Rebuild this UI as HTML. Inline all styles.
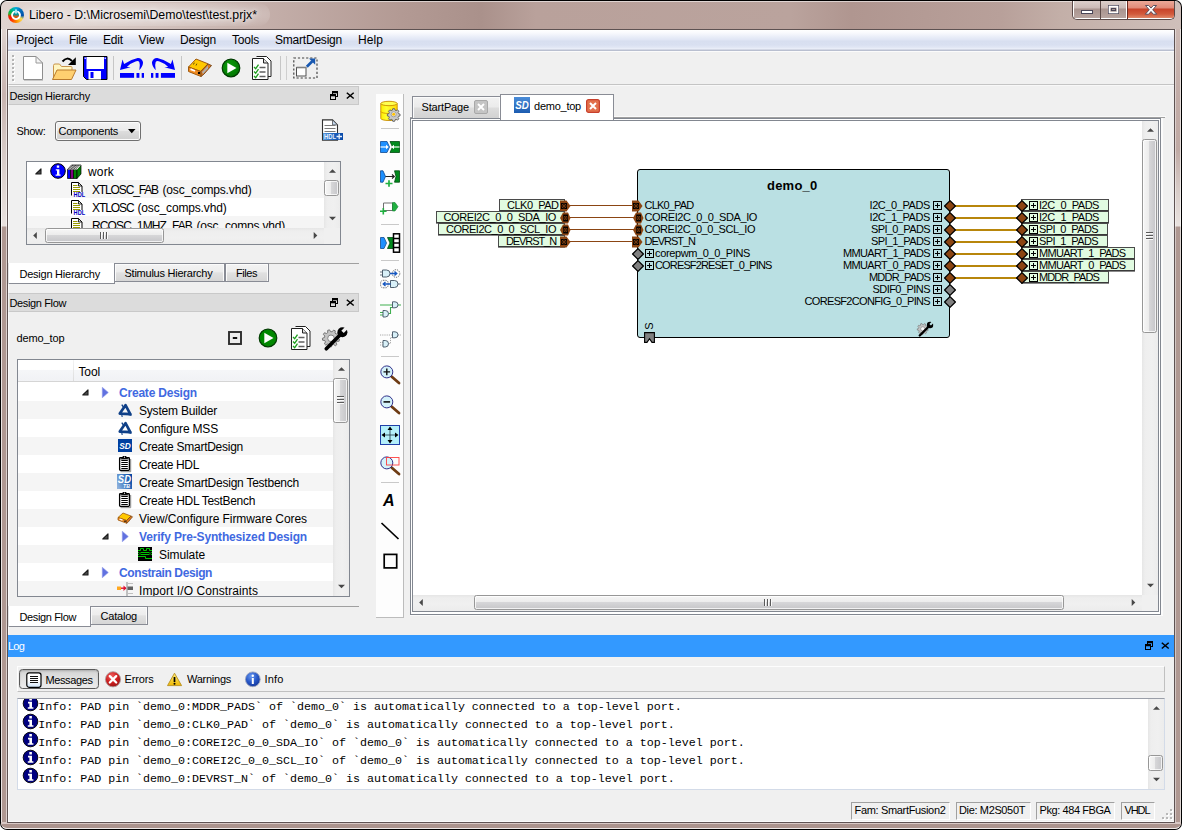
<!DOCTYPE html>
<html><head><meta charset="utf-8">
<style>

*{box-sizing:border-box;margin:0;padding:0}
html,body{width:1182px;height:830px;overflow:hidden;background:#fff}
body{font-family:"Liberation Sans",sans-serif;font-size:12px;color:#000;position:relative}
.a{position:absolute}
.t{position:absolute;white-space:pre;line-height:16px}
svg{position:absolute;overflow:visible}
#win{position:absolute;left:0;top:0;width:1182px;height:830px;border-radius:7px;background:#000;overflow:hidden}
#frame{position:absolute;left:1px;top:1px;width:1180px;height:828px;border-radius:6px;overflow:hidden;
 background:linear-gradient(90deg,#e0d4d0 0,#dccfca 80px,#c6b1ac 250px,#b39a94 400px,#aa918b 480px,#b9a19b 535px,#baa39d 790px,#b09690 850px,#b8a09a 1000px,#c3afa8 1060px,#cfbfba 1180px)}
#frame:before{content:"";position:absolute;left:0;top:0;width:100%;height:1px;background:rgba(255,255,255,.55)}
#fl,#fr{position:absolute;top:29px;width:6px;height:793px}
#fl{left:1px;border-left:1px solid rgba(255,255,255,.75);border-right:1px solid rgba(255,255,255,.55);background:linear-gradient(180deg,#e0d5d1 0,#d2c2be 31px,#c8b4b0 66px,#d4c6c2 111px,#e9e2df 197px,#af9892 198px,#af9892 100%)}
#fr{left:1175px;border-right:1px solid rgba(255,255,255,.6);border-left:1px solid rgba(255,255,255,.45);background:linear-gradient(180deg,#cbb8b3 0,#c2aca7 71px,#c0aaa5 121px,#d8ccc8 161px,#eae3e0 197px,#af9892 198px,#af9892 100%)}
#fb{position:absolute;left:1px;top:822px;width:1180px;height:7px;background:#ab938d;border-radius:0 0 6px 6px;border-bottom:1px solid rgba(255,255,255,.8);border-top:2px solid #d8c8c5}
#client{position:absolute;left:7px;top:29px;width:1168px;height:794px;background:#5e5252}
#ci{position:absolute;left:8px;top:30px;width:1166px;height:792px;background:#f0f0f0;overflow:hidden}
#pg{position:absolute;left:-8px;top:-30px;width:1182px;height:830px}
#title{position:absolute;left:29px;top:7px;font-size:12.3px;line-height:14px;white-space:nowrap;color:#000;text-shadow:0 0 5px #fff,0 0 8px #fff,0 0 12px rgba(255,255,255,.9)}

</style></head><body>
<div id="win"><div id="frame"></div><div id="fl"></div><div id="fr"></div><div id="fb"></div>
<div id="client"></div>
<div id="ci"><div id="pg">
<div class="a" style="left:8px;top:30px;width:1166px;height:21px;background:linear-gradient(180deg,#ffffff 0,#f8f9fd 3px,#e9edf8 7px,#dfe5f4 10px,#d8dff0 11px,#d9e0f1 15px,#e4e9f6 18px,#eef1fa 19px,#b9bfd0 20px,#b9bfd0 21px)"></div>
<div class="t" style="left:16.00px;top:32.00px;font-size:12px;line-height:16px;letter-spacing:-0.051px;">Project</div>
<div class="t" style="left:69.00px;top:32.00px;font-size:12px;line-height:16px;letter-spacing:-0.336px;">File</div>
<div class="t" style="left:103.00px;top:32.00px;font-size:12px;line-height:16px;letter-spacing:-0.172px;">Edit</div>
<div class="t" style="left:138.50px;top:32.00px;font-size:12px;line-height:16px;letter-spacing:-0.074px;">View</div>
<div class="t" style="left:180.00px;top:32.00px;font-size:12px;line-height:16px;letter-spacing:-0.227px;">Design</div>
<div class="t" style="left:232.00px;top:32.00px;font-size:12px;line-height:16px;letter-spacing:-0.203px;">Tools</div>
<div class="t" style="left:275.00px;top:32.00px;font-size:12px;line-height:16px;letter-spacing:-0.214px;">SmartDesign</div>
<div class="t" style="left:358.00px;top:32.00px;font-size:12px;line-height:16px;letter-spacing:0.078px;">Help</div>
<div class="a" style="left:8px;top:51px;width:1166px;height:1px;background:#fbfbfb"></div>
<div class="a" style="left:8px;top:84px;width:1166px;height:1px;background:#c4c4c4"></div>
<div class="a" style="left:8px;top:85px;width:1166px;height:1px;background:#f8f8f8"></div>
<svg class="a" style="left:12px;top:55px;" width="4" height="28" viewBox="0 0 4 28"><rect x="1" y="1" width="2" height="2" fill="#fff"/><rect x="0" y="0" width="2" height="2" fill="#b4b4b4"/><rect x="1" y="5" width="2" height="2" fill="#fff"/><rect x="0" y="4" width="2" height="2" fill="#b4b4b4"/><rect x="1" y="9" width="2" height="2" fill="#fff"/><rect x="0" y="8" width="2" height="2" fill="#b4b4b4"/><rect x="1" y="13" width="2" height="2" fill="#fff"/><rect x="0" y="12" width="2" height="2" fill="#b4b4b4"/><rect x="1" y="17" width="2" height="2" fill="#fff"/><rect x="0" y="16" width="2" height="2" fill="#b4b4b4"/><rect x="1" y="21" width="2" height="2" fill="#fff"/><rect x="0" y="20" width="2" height="2" fill="#b4b4b4"/><rect x="1" y="25" width="2" height="2" fill="#fff"/><rect x="0" y="24" width="2" height="2" fill="#b4b4b4"/></svg>
<svg class="a" style="left:22px;top:55px;" width="22" height="26" viewBox="0 0 22 26"><path d="M1.500 1.500h12.500l6.500 6.500v16.500h-19z" fill="#fff" stroke="#8e8e8e" stroke-width="1"/>
<path d="M14 1.500v6.500h6.500z" fill="#f4f4f4" stroke="#9a9a9a" stroke-width="1" stroke-linejoin="round"/>
<path d="M2 25.500h19" stroke="#c8c8c8" stroke-width="1"/></svg>
<svg class="a" style="left:51px;top:55px;" width="27" height="26" viewBox="0 0 27 26"><path d="M2.500 24.500V10.500q0-1.500 1.500-1.500h4.500l2 2.500h9.500q1 0 1 1v3" fill="#fff5c0" stroke="#c8944a" stroke-width="1"/>
<path d="M1.500 24.500l4.500-9.500h19l-4.500 9.500z" fill="#ffd070" stroke="#b97a2c" stroke-width="1" stroke-linejoin="round"/>
<path d="M11.500 6.500q4.500-5.500 9.500-.5" fill="none" stroke="#000" stroke-width="2"/>
<path d="M24.800 2.200v7.800h-7.800z" fill="#000"/></svg>
<svg class="a" style="left:83px;top:55px;" width="25" height="26" viewBox="0 0 25 26"><path d="M.5 1.500h23.500v23h-20.500l-3-3z" fill="#0000ff" stroke="#000" stroke-width="1"/>
<rect x="3.500" y="2" width="17.500" height="12" fill="#fff"/>
<rect x="5.500" y="16" width="12.500" height="8.500" fill="#fff"/>
<rect x="7.500" y="17" width="3" height="6" fill="#0000ff"/>
<rect x="1.500" y="2.500" width="1.500" height="1.500" fill="#c8c8ff"/><rect x="21.500" y="2.500" width="1.500" height="1.500" fill="#c8c8ff"/></svg>
<div class="a" style="left:113px;top:56px;width:1px;height:24px;background:#c6c6c6"></div>
<svg class="a" style="left:120px;top:56px;" width="24" height="24" viewBox="0 0 24 24"><path d="M0 14.100L2.500 3.400L4.100 8Q11 3.200 17.700 1.900Q21.500 1.600 23 6.100Q23.300 10 19.300 14.200Q20.500 9 19.300 6.100Q18.500 4.600 15.500 5.400Q11 6.800 6.800 11L10.600 11.300Z" fill="#0000ff"/>
<rect x="0" y="17" width="14.100" height="4.800" fill="#0000ff"/><rect x="16.500" y="17" width="2.900" height="4.800" fill="#0000ff"/><rect x="21.700" y="17" width="2.300" height="4.800" fill="#0000ff"/></svg>
<svg class="a" style="left:151px;top:56px;" width="24" height="24" viewBox="0 0 24 24"><g transform="translate(24,0) scale(-1,1)"><path d="M0 14.100L2.500 3.400L4.100 8Q11 3.200 17.700 1.900Q21.500 1.600 23 6.100Q23.300 10 19.300 14.200Q20.500 9 19.300 6.100Q18.500 4.600 15.500 5.400Q11 6.800 6.800 11L10.600 11.300Z" fill="#0000ff"/>
<rect x="0" y="17" width="14.100" height="4.800" fill="#0000ff"/><rect x="16.500" y="17" width="2.900" height="4.800" fill="#0000ff"/><rect x="21.700" y="17" width="2.300" height="4.800" fill="#0000ff"/></g></svg>
<div class="a" style="left:181px;top:56px;width:1px;height:24px;background:#c6c6c6"></div>
<svg class="a" style="left:187px;top:57px;" width="26" height="21" viewBox="0 0 26 21"><path d="M1.500 10L9 2l12 4.800L13.500 14.500z" fill="#ffc800" stroke="#a05a10" stroke-width="1" stroke-linejoin="round"/>
<path d="M1.500 10v4.500l12.500 5v-5z" fill="#f08a20" stroke="#a05a10" stroke-width="1" stroke-linejoin="round"/>
<path d="M14 14.500l7-7.500 3.500 1.500-7.500 8.500-3 2.500z" fill="#e07818" stroke="#7a4a20" stroke-width="1" stroke-linejoin="round"/>
<path d="M15 15l6-6.500v3l-5 5.500z" fill="#b0b0b0"/>
<path d="M3.500 12.200l4.500 1.800" stroke="#fff" stroke-width="1.800"/>
<circle cx="12" cy="16" r="1.200" fill="#000"/>
<path d="M6.500 7.500l.8-1.800M9 8.500l.8-1.800" stroke="#403000" stroke-width=".8"/></svg>
<svg class="a" style="left:221px;top:58px;" width="20" height="20" viewBox="0 0 20 20"><defs><radialGradient id="pg1" cx=".4" cy=".35" r=".8"><stop offset="0" stop-color="#0a9a0a"/><stop offset="1" stop-color="#007000"/></radialGradient></defs>
<circle cx="10" cy="10" r="8.800" fill="url(#pg1)" stroke="#003c00" stroke-width="1.200"/>
<path d="M6.300 4.800L15.500 10l-9.200 5.200z" fill="#fff"/></svg>
<svg class="a" style="left:252px;top:55px;" width="20" height="26" viewBox="0 0 20 26"><path d="M4.500 1.500h10l4.500 4.500v15.500h-3" fill="#fff" stroke="#202020" stroke-width="1"/>
<path d="M.5 3.500h11l4.500 4.500v16.500h-15.500z" fill="#fff" stroke="#202020" stroke-width="1"/>
<path d="M11.500 3.500v4.500h4.500" fill="#e0e0e0" stroke="#202020" stroke-width="1"/>
<path d="M7.500 12.500h6M7.500 17h6M7.500 21.500h6" stroke="#606060" stroke-width="1.300"/>
<path d="M2 12l1.700 1.700 2.800-4M2 16.500l1.700 1.700 2.800-4M2 21l1.700 1.700 2.800-4" fill="none" stroke="#20a020" stroke-width="1.300"/></svg>
<div class="a" style="left:280px;top:56px;width:1px;height:24px;background:#c6c6c6"></div>
<div class="a" style="left:286px;top:56px;width:1px;height:24px;background:#cfcfcf"></div>
<svg class="a" style="left:293px;top:57px;" width="25" height="22" viewBox="0 0 25 22"><rect x=".8" y="1" width="23.200" height="20" fill="none" stroke="#404040" stroke-width="1.150" stroke-dasharray="2.200 1.900"/>
<rect x="3.500" y="10.500" width="9.500" height="8.500" fill="#fff" stroke="#505050" stroke-width="1"/>
<path d="M3.500 10.500h9.500" stroke="#808080" stroke-width="1.600"/>
<path d="M13.800 9.800l5.500-5.500" stroke="#1858b0" stroke-width="2.700"/><path d="M16 1.600h6.200v6.200z" fill="#1858b0"/></svg>
<div class="a" style="left:8px;top:86px;width:351px;height:19px;background:#dcdcdc;border:1px solid #c9c9c9;border-left:none"></div><div class="t" style="left:9.50px;top:88.00px;font-size:11px;line-height:16px;letter-spacing:-0.242px;">Design Hierarchy</div><svg class="a" style="left:329px;top:91px;" width="10" height="10" viewBox="0 0 10 10"><rect x="3.500" y=".5" width="5" height="5" fill="#dcdcdc" stroke="#000" stroke-width="1"/><path d="M3.500 1.500h5" stroke="#000" stroke-width="1.600"/><rect x="1.500" y="3.500" width="5" height="5" fill="#dcdcdc" stroke="#000" stroke-width="1"/><path d="M1.500 4.500h5" stroke="#000" stroke-width="1.600"/></svg><svg class="a" style="left:345.7px;top:91.8px;" width="9" height="8" viewBox="0 0 9 8"><path d="M.8 .7L7.700 6.500M7.700 .7L.8 6.500" stroke="#000" stroke-width="1.500"/></svg>
<div class="t" style="left:16.50px;top:123.00px;font-size:11px;line-height:16px;letter-spacing:-0.316px;">Show:</div>
<div class="a" style="left:55px;top:121px;width:86px;height:20px;border:1px solid #707070;border-radius:3px;background:linear-gradient(180deg,#f2f2f2 0,#ebebeb 48%,#dddddd 52%,#cfcfcf 100%);box-shadow:inset 0 0 0 1px #fcfcfc"></div>
<div class="t" style="left:58.50px;top:123.00px;font-size:11px;line-height:16px;letter-spacing:-0.287px;">Components</div>
<svg class="a" style="left:128px;top:129px;" width="8" height="5" viewBox="0 0 8 5"><path d="M0 0h7.500l-3.750 4.300z" fill="#000"/></svg>
<svg class="a" style="left:321px;top:119px;" width="23" height="22" viewBox="0 0 23 22"><defs><linearGradient id="hp" x1="0" y1="0" x2="1" y2="0"><stop offset="0" stop-color="#5c9ce0"/><stop offset=".5" stop-color="#1c64c0"/><stop offset="1" stop-color="#0848a8"/></linearGradient></defs>
<path d="M1.500 21.200V.9h10l5 5v15.300z" fill="#fff" stroke="#303030" stroke-width="1.100"/><path d="M11.500 .9v5h5z" fill="#c4d8f0" stroke="#505050" stroke-width=".8" stroke-linejoin="round"/>
<path d="M3.500 6.500h11M3.500 9.500h11M3.500 12.500h11" stroke="#7a7a7a" stroke-width="1"/>
<rect x="2" y="14" width="20" height="7" fill="url(#hp)"/><text x="3" y="20" font-family="Liberation Sans" font-weight="bold" font-size="6.500" fill="#e8f0fc" textLength="12" lengthAdjust="spacingAndGlyphs">HDL</text>
<path d="M15.500 17.500h5.500M18.200 14.800v5.400" stroke="#e8f0fc" stroke-width="1.300"/></svg>
<div class="a" style="left:26px;top:161px;width:315px;height:84px;border:1px solid #828790;background:#fff"></div>
<div class="a" style="left:27px;top:180px;width:297px;height:18px;background:#f5f5f5"></div>
<div class="a" style="left:27px;top:216px;width:297px;height:12px;background:#f5f5f5"></div>
<svg class="a" style="left:35px;top:168px;" width="7" height="7" viewBox="0 0 7 7"><path d="M6 .8V6H.8z" fill="#4a4a4a" stroke="#1c1c1c" stroke-width="1.100" stroke-linejoin="round"/></svg>
<svg class="a" style="left:50px;top:163px;" width="16" height="16" viewBox="0 0 16 16"><circle cx="8" cy="8" r="7.300" fill="#0000ff" stroke="#000" stroke-width="1"/>
<path d="M6.800 2.600h2.400v2.200h-2.400zM5.800 6.200h3.600v5.200h1.200v1.400h-5v-1.400h1.400v-3.800h-1.200z" fill="#fff"/></svg>
<svg class="a" style="left:67px;top:164px;" width="15" height="15" viewBox="0 0 15 15"><path d="M.5 5.500h3v9h-3z" fill="#0000ff" stroke="#000" stroke-width=".7"/><path d="M3.500 5.500h3v9h-3z" fill="#800080" stroke="#000" stroke-width=".7"/><path d="M6.500 5.500h3.500v9h-3.500z" fill="#008000" stroke="#000" stroke-width=".7"/>
<path d="M10 5.500l4-4.500v9l-4 4.500z" fill="#008000" stroke="#000" stroke-width=".7"/>
<path d="M.5 5.500l4-4.500h9.500l-4 4.500z" fill="#fff"/><path d="M.5 5.500l4-4.500h9.500M3.500 5.500l4-4.500M6.500 5.500l4-4.500M2 5.500l4-4.500M5 5.500l4-4.500M8.300 5.500l4-4.500" stroke="#000" stroke-width=".7" fill="none"/></svg>
<div class="t" style="left:88.00px;top:164.00px;font-size:12px;line-height:16px;letter-spacing:0.164px;">work</div>
<svg class="a" style="left:71px;top:182px;" width="15" height="16" viewBox="0 0 15 16"><path d="M.5 13.500V.5h7l3.500 3.500v6" fill="#fff" stroke="#000" stroke-width="1"/><path d="M7.500 .5v3.500h3.500z" fill="#d8d8d8" stroke="#000" stroke-width=".8" stroke-linejoin="round"/>
<path d="M2 3.500h4.500M2 5.500h7M2 7.500h7M2 9.500h7" stroke="#9a9a00" stroke-width="1"/>
<text x="2.600" y="15.300" font-family="Liberation Sans" font-weight="bold" font-size="6.500" fill="#0000c0" textLength="11.500" lengthAdjust="spacingAndGlyphs">HDL</text></svg>
<div class="t" style="left:92.00px;top:182.00px;font-size:12px;line-height:16px;letter-spacing:-1.137px;">XTLOSC_FAB</div><div class="t" style="left:162.50px;top:182.00px;font-size:12px;line-height:16px;letter-spacing:-0.158px;">(osc_comps.vhd)</div>
<svg class="a" style="left:71px;top:200px;" width="15" height="16" viewBox="0 0 15 16"><path d="M.5 13.500V.5h7l3.500 3.500v6" fill="#fff" stroke="#000" stroke-width="1"/><path d="M7.500 .5v3.500h3.500z" fill="#d8d8d8" stroke="#000" stroke-width=".8" stroke-linejoin="round"/>
<path d="M2 3.500h4.500M2 5.500h7M2 7.500h7M2 9.500h7" stroke="#9a9a00" stroke-width="1"/>
<text x="2.600" y="15.300" font-family="Liberation Sans" font-weight="bold" font-size="6.500" fill="#0000c0" textLength="11.500" lengthAdjust="spacingAndGlyphs">HDL</text></svg>
<div class="t" style="left:92.00px;top:200.00px;font-size:12px;line-height:16px;letter-spacing:-1.086px;">XTLOSC</div><div class="t" style="left:137.50px;top:200.00px;font-size:12px;line-height:16px;letter-spacing:-0.158px;">(osc_comps.vhd)</div>
<div class="a" style="left:27px;top:216px;width:297px;height:12px;overflow:hidden"><div class="a" style="left:-27px;top:-216px;width:400px;height:300px"><svg class="a" style="left:71px;top:218px;" width="15" height="16" viewBox="0 0 15 16"><path d="M.5 13.500V.5h7l3.500 3.500v6" fill="#fff" stroke="#000" stroke-width="1"/><path d="M7.500 .5v3.500h3.500z" fill="#d8d8d8" stroke="#000" stroke-width=".8" stroke-linejoin="round"/>
<path d="M2 3.500h4.500M2 5.500h7M2 7.500h7M2 9.500h7" stroke="#9a9a00" stroke-width="1"/>
<text x="2.600" y="15.300" font-family="Liberation Sans" font-weight="bold" font-size="6.500" fill="#0000c0" textLength="11.500" lengthAdjust="spacingAndGlyphs">HDL</text></svg><div class="t" style="left:92.00px;top:218.00px;font-size:12px;line-height:16px;letter-spacing:-0.859px;">RCOSC_1MHZ_FAB</div><div class="t" style="left:196.50px;top:218.00px;font-size:12px;line-height:16px;letter-spacing:-0.192px;">(osc_comps.vhd)</div></div></div>
<div class="a" style="left:324px;top:162px;width:16px;height:66px;background:linear-gradient(90deg,#e6e6e6 0,#eeeeee 3px,#f0f0f0 60%,#ececec 100%)"></div><svg class="a" style="left:0;top:0" width="1" height="1"><path d="M329.0 172.8L332.5 169.2L336.0 172.8z" fill="#484848"/></svg><svg class="a" style="left:0;top:0" width="1" height="1"><path d="M329.0 216.7L332.5 220.3L336.0 216.7z" fill="#484848"/></svg><div class="a" style="left:324px;top:180px;width:15px;height:16px;border:1px solid #979797;border-radius:2.500px;background:linear-gradient(90deg,#f6f6f6 0,#ececec 45%,#d6d6d8 50%,#c6c6c9 100%);box-shadow:inset 0 0 0 1px rgba(255,255,255,.75)"></div>
<div class="a" style="left:27px;top:228px;width:297px;height:16px;background:linear-gradient(180deg,#e6e6e6 0,#eeeeee 3px,#f0f0f0 60%,#ececec 100%)"></div><svg class="a" style="left:0;top:0" width="1" height="1"><path d="M36.8 232.0L33.2 235.5L36.8 239.0z" fill="#484848"/></svg><svg class="a" style="left:0;top:0" width="1" height="1"><path d="M313.7 232.0L317.3 235.5L313.7 239.0z" fill="#484848"/></svg><div class="a" style="left:45px;top:228px;width:119px;height:15px;border:1px solid #979797;border-radius:2.500px;background:linear-gradient(180deg,#f6f6f6 0,#ececec 45%,#d6d6d8 50%,#c6c6c9 100%);box-shadow:inset 0 0 0 1px rgba(255,255,255,.75)"></div><div class="a" style="left:100px;top:232px;width:1px;height:7px;background:#5a5a5a"></div><div class="a" style="left:101px;top:232px;width:1px;height:7px;background:#fafafa"></div><div class="a" style="left:103px;top:232px;width:1px;height:7px;background:#5a5a5a"></div><div class="a" style="left:104px;top:232px;width:1px;height:7px;background:#fafafa"></div><div class="a" style="left:106px;top:232px;width:1px;height:7px;background:#5a5a5a"></div><div class="a" style="left:107px;top:232px;width:1px;height:7px;background:#fafafa"></div>
<div class="a" style="left:324px;top:228px;width:16px;height:16px;background:#f0f0f0"></div>
<div class="a" style="left:8px;top:263px;width:351px;height:1px;background:#a0a0a0"></div>
<div class="a" style="left:114px;top:263px;width:111px;height:19px;border:1px solid #898c95;border-top:1px solid #898c95;background:linear-gradient(180deg,#f3f3f3 0,#ededed 46%,#e1e1e1 52%,#d6d6d6 100%);box-shadow:inset 1px 1px 0 #fbfbfb,inset -1px 0 0 #fbfbfb"></div><div class="t" style="left:124.50px;top:265.00px;font-size:11px;line-height:16px;letter-spacing:-0.240px;">Stimulus Hierarchy</div>
<div class="a" style="left:225px;top:263px;width:44px;height:19px;border:1px solid #898c95;border-top:1px solid #898c95;background:linear-gradient(180deg,#f3f3f3 0,#ededed 46%,#e1e1e1 52%,#d6d6d6 100%);box-shadow:inset 1px 1px 0 #fbfbfb,inset -1px 0 0 #fbfbfb"></div><div class="t" style="left:236.00px;top:265.00px;font-size:11px;line-height:16px;letter-spacing:-0.447px;">Files</div>
<div class="a" style="left:8px;top:263px;width:107px;height:21px;background:#fff;border:1px solid #898c95;border-top:none;border-left-color:#b4b6bc"></div><div class="t" style="left:19.50px;top:266.00px;font-size:11px;line-height:16px;letter-spacing:-0.242px;">Design Hierarchy</div>
<div class="a" style="left:8px;top:293px;width:351px;height:19px;background:#dcdcdc;border:1px solid #c9c9c9;border-left:none"></div><div class="t" style="left:9.50px;top:295.00px;font-size:11px;line-height:16px;letter-spacing:-0.366px;">Design Flow</div><svg class="a" style="left:329px;top:298px;" width="10" height="10" viewBox="0 0 10 10"><rect x="3.500" y=".5" width="5" height="5" fill="#dcdcdc" stroke="#000" stroke-width="1"/><path d="M3.500 1.500h5" stroke="#000" stroke-width="1.600"/><rect x="1.500" y="3.500" width="5" height="5" fill="#dcdcdc" stroke="#000" stroke-width="1"/><path d="M1.500 4.500h5" stroke="#000" stroke-width="1.600"/></svg><svg class="a" style="left:345.7px;top:298.8px;" width="9" height="8" viewBox="0 0 9 8"><path d="M.8 .7L7.700 6.500M7.700 .7L.8 6.500" stroke="#000" stroke-width="1.500"/></svg>
<div class="t" style="left:16.50px;top:330.00px;font-size:11px;line-height:16px;letter-spacing:-0.117px;">demo_top</div>
<svg class="a" style="left:228px;top:331px;" width="14" height="14" viewBox="0 0 14 14"><rect x="1" y="1" width="12" height="12" fill="#ececec" stroke="#2c2c2c" stroke-width="1.900"/><path d="M4.800 7h4.400" stroke="#101010" stroke-width="2"/></svg>
<svg class="a" style="left:258px;top:328px;" width="20" height="20" viewBox="0 0 20 20"><circle cx="10" cy="10" r="8.800" fill="#008800" stroke="#003c00" stroke-width="1.200"/><path d="M6.300 4.800L15.500 10l-9.200 5.200z" fill="#fff"/></svg>
<svg class="a" style="left:291px;top:325px;" width="20" height="26" viewBox="0 0 20 26"><path d="M4.500 1.500h10l4.500 4.500v15.500h-3" fill="#fff" stroke="#202020" stroke-width="1"/>
<path d="M.5 3.500h11l4.500 4.500v16.500h-15.500z" fill="#fff" stroke="#202020" stroke-width="1"/>
<path d="M11.500 3.500v4.500h4.500" fill="#e0e0e0" stroke="#202020" stroke-width="1"/>
<path d="M7.500 12.500h6M7.500 17h6M7.500 21.500h6" stroke="#606060" stroke-width="1.300"/>
<path d="M2 12l1.700 1.700 2.800-4M2 16.500l1.700 1.700 2.800-4M2 21l1.700 1.700 2.800-4" fill="none" stroke="#20a020" stroke-width="1.300"/></svg>
<svg class="a" style="left:322px;top:326px;" width="26" height="26" viewBox="0 0 26 26"><g transform="scale(1.0)"><defs><mask id="gw1"><rect x="0" y="0" width="26" height="26" fill="#fff"/><rect x="19.200" y="-3" width="3.400" height="9" fill="#000" transform="rotate(45 20.900 5.500)"/></mask></defs>
<path d="M15.60 12.30L17.53 13.38L17.08 15.24L14.87 15.32L14.06 16.54L14.84 18.61L13.30 19.75L11.56 18.38L10.15 18.80L9.42 20.89L7.51 20.77L7.05 18.60L5.70 18.02L3.80 19.15L2.41 17.83L3.45 15.88L2.80 14.56L0.61 14.21L0.40 12.30L2.45 11.47L2.80 10.04L1.35 8.37L2.41 6.77L4.52 7.46L5.70 6.58L5.67 4.37L7.51 3.83L8.68 5.71L10.15 5.80L11.54 4.08L13.30 4.85L12.99 7.04L14.06 8.06L16.23 7.64L17.08 9.36L15.44 10.84Z" fill="#c4c4c4" stroke="#6a6a6a" stroke-width=".9" stroke-linejoin="round"/>
<circle cx="9.0" cy="12.3" r="3.300" fill="#f8f8f8" stroke="#7a7a7a" stroke-width=".9"/>
<path d="M4.300 22.700L18 9" stroke="#000" stroke-width="3.700" stroke-linecap="round"/>
<circle cx="20.400" cy="6.200" r="5" fill="#000" mask="url(#gw1)"/></g></svg>
<div class="a" style="left:17px;top:359px;width:333px;height:238px;border:1px solid #828790;background:#fff"></div>
<div class="a" style="left:18px;top:360px;width:315px;height:22px;background:linear-gradient(180deg,#fff 0,#fff 45%,#f5f6f8 50%,#f1f2f5 100%);border-bottom:1px solid #d5d5d5"></div>
<div class="a" style="left:73px;top:360px;width:1px;height:21px;background:linear-gradient(180deg,#f4f4f4,#dcdcdc)"></div>
<div class="t" style="left:78.50px;top:364.00px;font-size:12px;line-height:16px;letter-spacing:-0.129px;">Tool</div>
<div class="a" style="left:18px;top:401px;width:315px;height:18px;background:#f5f5f5"></div>
<div class="a" style="left:18px;top:437px;width:315px;height:18px;background:#f5f5f5"></div>
<div class="a" style="left:18px;top:473px;width:315px;height:18px;background:#f5f5f5"></div>
<div class="a" style="left:18px;top:509px;width:315px;height:18px;background:#f5f5f5"></div>
<div class="a" style="left:18px;top:545px;width:315px;height:18px;background:#f5f5f5"></div>
<div class="a" style="left:18px;top:581px;width:315px;height:15px;background:#f5f5f5"></div>
<svg class="a" style="left:82px;top:389px;" width="7" height="7" viewBox="0 0 7 7"><path d="M6 .8V6H.8z" fill="#4a4a4a" stroke="#1c1c1c" stroke-width="1.100" stroke-linejoin="round"/></svg>
<svg class="a" style="left:102px;top:386.5px;" width="7" height="11" viewBox="0 0 7 11"><path d="M.3 .3L6.300 5.500L.3 10.700z" fill="#6171e0" stroke="#8d99ea" stroke-width=".6"/></svg>
<div class="t" style="left:119.00px;top:384.50px;font-size:12px;line-height:16px;letter-spacing:-0.208px;font-weight:bold;color:#4169e1;">Create Design</div>
<svg class="a" style="left:118px;top:403px;" width="14" height="15" viewBox="0 0 14 15"><path d="M7.500 2.200L12.300 11.200L1.800 10.600Z" fill="none" stroke="#0f4088" stroke-width="2.700" stroke-linejoin="round"/>
<path d="M3.800 1.600l1.600 2.600M3.600 12.200l.8 1.600" stroke="#0f4088" stroke-width="1.300"/><path d="M10.500 8.500l3 2.200v2.300l-3.500-1z" fill="#0f4088"/></svg>
<div class="t" style="left:139.00px;top:402.50px;font-size:12px;line-height:16px;letter-spacing:-0.193px;">System Builder</div>
<svg class="a" style="left:118px;top:421px;" width="14" height="15" viewBox="0 0 14 15"><path d="M7.500 2.200L12.300 11.200L1.800 10.600Z" fill="none" stroke="#0f4088" stroke-width="2.700" stroke-linejoin="round"/>
<path d="M3.800 1.600l1.600 2.600M3.600 12.200l.8 1.600" stroke="#0f4088" stroke-width="1.300"/><path d="M10.500 8.500l3 2.200v2.300l-3.500-1z" fill="#0f4088"/></svg>
<div class="t" style="left:139.00px;top:420.50px;font-size:12px;line-height:16px;letter-spacing:-0.183px;">Configure MSS</div>
<svg class="a" style="left:118px;top:439px;" width="14" height="13" viewBox="0 0 14 13"><rect x="0" y="0" width="14" height="13" fill="#0040a0"/><text x="1.300" y="10.300" font-family="Liberation Sans" font-weight="bold" font-style="italic" font-size="9.200" fill="#fff" textLength="11.600" lengthAdjust="spacingAndGlyphs">SD</text></svg>
<div class="t" style="left:139.00px;top:438.50px;font-size:12px;line-height:16px;letter-spacing:-0.262px;">Create SmartDesign</div>
<svg class="a" style="left:118px;top:455px;" width="14" height="17" viewBox="0 0 14 17"><path d="M12.700 4v12.700H2.500" stroke="#8a8a8a" stroke-width="1" fill="none"/><rect x="1.600" y="2.600" width="9.800" height="12.800" rx=".8" fill="#fff" stroke="#000" stroke-width="1.300"/><path d="M4 3.800l.8-2.800h3.400l.8 2.800z" fill="#000"/><path d="M2.500 3.800h8" stroke="#000" stroke-width="1.200"/><circle cx="6.500" cy="2.200" r=".6" fill="#fff"/>
<path d="M3.300 5.500h6.500M3.300 7.500h6.500M3.300 9.500h6.500M3.300 11.500h6.500M3.300 13.500h6.500" stroke="#000" stroke-width="1"/></svg>
<div class="t" style="left:139.00px;top:456.50px;font-size:12px;line-height:16px;letter-spacing:-0.336px;">Create HDL</div>
<svg class="a" style="left:117px;top:474px;" width="15" height="15" viewBox="0 0 15 15"><defs><linearGradient id="sdtb" x1="0" y1=".7" x2="1" y2=".3"><stop offset="0" stop-color="#8cb0dc"/><stop offset=".45" stop-color="#4c84c8"/><stop offset="1" stop-color="#0848a4"/></linearGradient></defs><rect x="0" y="0" width="15" height="15" fill="url(#sdtb)"/>
<text x=".8" y="8.500" font-family="Liberation Sans" font-weight="bold" font-style="italic" font-size="10" fill="#fff" textLength="13.200" lengthAdjust="spacingAndGlyphs">SD</text>
<text x="6" y="14" font-family="Liberation Sans" font-weight="bold" font-style="italic" font-size="5.800" fill="#fff" textLength="7" lengthAdjust="spacingAndGlyphs">TB</text></svg>
<div class="t" style="left:139.00px;top:474.50px;font-size:12px;line-height:16px;letter-spacing:-0.233px;">Create SmartDesign Testbench</div>
<svg class="a" style="left:118px;top:491px;" width="14" height="17" viewBox="0 0 14 17"><path d="M12.700 4v12.700H2.500" stroke="#8a8a8a" stroke-width="1" fill="none"/><rect x="1.600" y="2.600" width="9.800" height="12.800" rx=".8" fill="#fff" stroke="#000" stroke-width="1.300"/><path d="M4 3.800l.8-2.800h3.400l.8 2.800z" fill="#000"/><path d="M2.500 3.800h8" stroke="#000" stroke-width="1.200"/><circle cx="6.500" cy="2.200" r=".6" fill="#fff"/>
<path d="M3.300 5.500h6.500M3.300 7.500h6.500M3.300 9.500h6.500M3.300 11.500h6.500M3.300 13.500h6.500" stroke="#000" stroke-width="1"/></svg>
<div class="t" style="left:139.00px;top:492.50px;font-size:12px;line-height:16px;letter-spacing:-0.303px;">Create HDL TestBench</div>
<svg class="a" style="left:117px;top:512px;" width="16" height="12" viewBox="0 0 16 12"><path d="M1 5.500L6 1l8 3L9.500 8.500z" fill="#ffc800" stroke="#a05a10" stroke-width=".8" stroke-linejoin="round"/>
<path d="M1 5.500v2.500l8.500 3.200v-2.700z" fill="#f08a20" stroke="#a05a10" stroke-width=".8" stroke-linejoin="round"/>
<path d="M9.500 8.500L14 4l1.500 .8-4.500 5.500-1.500 1z" fill="#e07818" stroke="#7a4a20" stroke-width=".8" stroke-linejoin="round"/>
<path d="M2.500 7l3 1.100" stroke="#fff" stroke-width="1.300"/><circle cx="8" cy="9.300" r=".8" fill="#000"/></svg>
<div class="t" style="left:139.00px;top:510.50px;font-size:12px;line-height:16px;letter-spacing:-0.064px;">View/Configure Firmware Cores</div>
<svg class="a" style="left:102px;top:533px;" width="7" height="7" viewBox="0 0 7 7"><path d="M6 .8V6H.8z" fill="#4a4a4a" stroke="#1c1c1c" stroke-width="1.100" stroke-linejoin="round"/></svg>
<svg class="a" style="left:122px;top:530.5px;" width="7" height="11" viewBox="0 0 7 11"><path d="M.3 .3L6.300 5.500L.3 10.700z" fill="#6171e0" stroke="#8d99ea" stroke-width=".6"/></svg>
<div class="t" style="left:139.00px;top:528.50px;font-size:12px;line-height:16px;letter-spacing:-0.163px;font-weight:bold;color:#4169e1;">Verify Pre-Synthesized Design</div>
<svg class="a" style="left:138px;top:547px;" width="14" height="14" viewBox="0 0 14 14"><rect x="0" y="0" width="14" height="14" fill="#000"/><g fill="none" stroke="#00c800" stroke-width="1"><path d="M0 3.500h2.500v-2h3v2h3v-2h3v2h2.500"/>
<path d="M2.500 5.500h9M2.500 7.500h9"/><path d="M0 5.500l1 0 1 1-1 1-1 0M14 5.500l-1 0-1 1 1 1 1 0" stroke-width=".9"/><path d="M0 9.500h7.500v2h6.500"/></g></svg>
<div class="t" style="left:159.00px;top:546.50px;font-size:12px;line-height:16px;letter-spacing:-0.086px;">Simulate</div>
<svg class="a" style="left:82px;top:569px;" width="7" height="7" viewBox="0 0 7 7"><path d="M6 .8V6H.8z" fill="#4a4a4a" stroke="#1c1c1c" stroke-width="1.100" stroke-linejoin="round"/></svg>
<svg class="a" style="left:102px;top:566.5px;" width="7" height="11" viewBox="0 0 7 11"><path d="M.3 .3L6.300 5.500L.3 10.700z" fill="#6171e0" stroke="#8d99ea" stroke-width=".6"/></svg>
<div class="t" style="left:119.00px;top:564.50px;font-size:12px;line-height:16px;letter-spacing:-0.397px;font-weight:bold;color:#4169e1;">Constrain Design</div>
<div class="a" style="left:18px;top:581px;width:315px;height:15px;overflow:hidden"><div class="a" style="left:-18px;top:-581px;width:400px;height:700px"><svg class="a" style="left:117px;top:582px;" width="16" height="14" viewBox="0 0 16 14"><rect x="0" y="4.500" width="4" height="3.500" fill="#ffa820"/><path d="M4 6.200h5" stroke="#e01030" stroke-width="1.400"/><path d="M6.500 3.500l3 2.700-3 2.700z" fill="#e01030"/>
<path d="M10 0v14" stroke="#8a8a8a" stroke-width="1"/><path d="M10 1.500h6M10 11.500h6" stroke="#c0c0c0" stroke-width="1"/><rect x="10.500" y="4.500" width="5.500" height="3.500" fill="#606060"/></svg><div class="t" style="left:139.00px;top:582.50px;font-size:12px;line-height:16px;letter-spacing:0.074px;">Import I/O Constraints</div></div></div>
<div class="a" style="left:333px;top:360px;width:16px;height:236px;background:linear-gradient(90deg,#e6e6e6 0,#eeeeee 3px,#f0f0f0 60%,#ececec 100%)"></div><svg class="a" style="left:0;top:0" width="1" height="1"><path d="M338.0 370.8L341.5 367.2L345.0 370.8z" fill="#484848"/></svg><svg class="a" style="left:0;top:0" width="1" height="1"><path d="M338.0 584.7L341.5 588.3L345.0 584.7z" fill="#484848"/></svg><div class="a" style="left:333px;top:378px;width:15px;height:45px;border:1px solid #979797;border-radius:2.500px;background:linear-gradient(90deg,#f6f6f6 0,#ececec 45%,#d6d6d8 50%,#c6c6c9 100%);box-shadow:inset 0 0 0 1px rgba(255,255,255,.75)"></div><div class="a" style="left:337px;top:396px;width:7px;height:1px;background:#5a5a5a"></div><div class="a" style="left:337px;top:397px;width:7px;height:1px;background:#fafafa"></div><div class="a" style="left:337px;top:399px;width:7px;height:1px;background:#5a5a5a"></div><div class="a" style="left:337px;top:400px;width:7px;height:1px;background:#fafafa"></div><div class="a" style="left:337px;top:402px;width:7px;height:1px;background:#5a5a5a"></div><div class="a" style="left:337px;top:403px;width:7px;height:1px;background:#fafafa"></div>
<div class="a" style="left:8px;top:606px;width:351px;height:1px;background:#a0a0a0"></div>
<div class="a" style="left:90px;top:606px;width:58px;height:19px;border:1px solid #898c95;border-top:1px solid #898c95;background:linear-gradient(180deg,#f3f3f3 0,#ededed 46%,#e1e1e1 52%,#d6d6d6 100%);box-shadow:inset 1px 1px 0 #fbfbfb,inset -1px 0 0 #fbfbfb"></div><div class="t" style="left:100.50px;top:608.00px;font-size:11px;line-height:16px;letter-spacing:-0.203px;">Catalog</div>
<div class="a" style="left:8px;top:606px;width:83px;height:21px;background:#fff;border:1px solid #898c95;border-top:none;border-left-color:#b4b6bc"></div><div class="t" style="left:19.50px;top:609.00px;font-size:11px;line-height:16px;letter-spacing:-0.366px;">Design Flow</div>
<div class="a" style="left:376px;top:94px;width:28px;height:524px;background:#fdfdfd;border-right:1px solid #bcbcbc;border-bottom:1px solid #bcbcbc"></div>
<div class="a" style="left:381px;top:128px;width:18px;height:1px;background:#c9c9c9"></div>
<div class="a" style="left:381px;top:224px;width:18px;height:1px;background:#c9c9c9"></div>
<div class="a" style="left:381px;top:260px;width:18px;height:1px;background:#c9c9c9"></div>
<div class="a" style="left:381px;top:356px;width:18px;height:1px;background:#c9c9c9"></div>
<div class="a" style="left:381px;top:482px;width:18px;height:1px;background:#c9c9c9"></div>
<svg class="a" style="left:380px;top:100px;" width="21" height="22" viewBox="0 0 21 22"><defs><linearGradient id="cy" x1="0" y1="0" x2="1" y2="0"><stop offset="0" stop-color="#ffee00"/><stop offset=".35" stop-color="#ffff30"/><stop offset="1" stop-color="#ffd800"/></linearGradient></defs>
<path d="M.8 3.500v15a8.200 2 0 0 0 16.400 0v-15" fill="url(#cy)" stroke="#c88a00" stroke-width=".9"/>
<ellipse cx="9" cy="3.500" rx="8.200" ry="2.200" fill="#ffff50" stroke="#c88a00" stroke-width=".9"/>
<path d="M.8 11.500a8.200 2 0 0 0 16.400 0" fill="none" stroke="#d89800" stroke-width=".9"/>
<g transform="translate(13.700,14.300) scale(.78)"><path d="M-1.200 -7.200h2.400l.5 1.900 1.500.6 1.700-1 1.700 1.700-1 1.700.6 1.500 1.900.5v2.400l-1.900.5-.6 1.500 1 1.700-1.700 1.700-1.700-1-1.500.6-.5 1.900h-2.400l-.5-1.900-1.500-.6-1.700 1-1.700-1.700 1-1.700-.6-1.500-1.900-.5v-2.400l1.900-.5.600-1.500-1-1.700 1.700-1.700 1.700 1 1.500-.6z" fill="#c8c8c8" stroke="#5a5a5a" stroke-width="1.100" stroke-linejoin="round"/><circle r="3.200" fill="#f4f4f4" stroke="#808080" stroke-width=".8"/><circle r="2" fill="#ffc000"/></g></svg>
<svg class="a" style="left:380px;top:141px;" width="20" height="13" viewBox="0 0 20 13"><path d="M.5 .5h6.500l2.500 5.500-2.500 5.500h-6.500z" fill="#1e90ff" stroke="#104a90" stroke-width=".8"/>
<path d="M10 .5h9.500v11h-9.500l2.500-5.500z" fill="#008a1c" stroke="#004a10" stroke-width=".8"/>
<path d="M.5 6h7" stroke="#e8f4ff" stroke-width="1.300"/><path d="M6 3.800l2.700 2.200-2.700 2.200z" fill="#fff"/><path d="M19.500 6h-7" stroke="#e0f4e4" stroke-width="1.300"/><path d="M14 3.800l-2.700 2.200 2.700 2.200z" fill="#fff"/></svg>
<svg class="a" style="left:380px;top:170px;" width="20" height="17" viewBox="0 0 20 17"><path d="M.5 .8h2.500l2.500 5.700-2.500 5.700h-2.500z" fill="#1e90ff" stroke="#104a90" stroke-width=".8"/>
<path d="M14.500 .8h5v11.400h-5l1.500-5.700z" fill="#008a1c" stroke="#004a10" stroke-width=".8"/>
<path d="M5.500 6.500h9M12 4.500l2.300 2-2.300 2" stroke="#202020" stroke-width="1.100" fill="none"/>
<path d="M5.500 13.500h7M9 10.200v6.600" stroke="#20b040" stroke-width="1.700"/></svg>
<svg class="a" style="left:380px;top:201px;" width="19" height="14" viewBox="0 0 19 14"><path d="M3.500 2h9v7.500h-9z" fill="#fff" stroke="#707070" stroke-width="1"/>
<path d="M12.500 1.500h2.500l3 4.200-3 4.300h-2.500z" fill="#20b040" stroke="#108030" stroke-width=".6"/>
<path d="M0 10.300h6.600M3.300 7v6.600" stroke="#20b040" stroke-width="1.600"/></svg>
<svg class="a" style="left:380px;top:233px;" width="21" height="20" viewBox="0 0 21 20"><path d="M.5 4.500h3.500l2.500 5.500-2.500 5.500h-3.500z" fill="#1e90ff" stroke="#104a90" stroke-width=".8"/>
<path d="M7.500 4.500h6v11h-6l2.500-5.500z" fill="#008a1c" stroke="#004a10" stroke-width=".8"/>
<rect x="13.500" y=".8" width="6" height="18.400" fill="#fff" stroke="#000" stroke-width="1.500"/><path d="M13.500 5.500h6M13.500 10h6M13.500 14.500h6" stroke="#000" stroke-width="1.300"/></svg>
<svg class="a" style="left:380px;top:269px;" width="21" height="20" viewBox="0 0 21 20"><path d="M2.5 1h4.0a3.5 3.5 0 0 1 0 7h-4.0z" fill="#d8f0f8" stroke="#405060" stroke-width=".9"/><path d="M0 3h2.500M0 6h2.500" stroke="#405060" stroke-width=".8"/><circle cx="16" cy="4.500" r="3.800" fill="none" stroke="#404040" stroke-width=".8" stroke-dasharray="1.300 1"/><path d="M10 4.500h6.500M14.500 2.500l2.300 2-2.300 2" stroke="#1858c0" stroke-width="1.300" fill="none"/><path d="M10.5 11.5h4.0a3.5 3.5 0 0 1 0 7h-4.0z" fill="#d8f0f8" stroke="#405060" stroke-width=".9"/><path d="M18 15h2.500" stroke="#405060" stroke-width=".8"/><rect x=".6" y="11.300" width="7.500" height="7.500" rx="2.500" fill="none" stroke="#404040" stroke-width=".8" stroke-dasharray="1.300 1"/><path d="M10.500 15h-7M5.500 13l-2.300 2 2.300 2" stroke="#1858c0" stroke-width="1.300" fill="none"/></svg>
<svg class="a" style="left:380px;top:301px;" width="21" height="17" viewBox="0 0 21 17"><path d="M0 4h12.500M18 4h3M0 11.500h3M0 14h3M8.500 12.500h2v-6h2" stroke="#40b050" stroke-width="1.100" fill="none"/><path d="M12.5 0.8h2.5a3.0 3.0 0 0 1 0 6h-2.5z" fill="#d8f0f8" stroke="#405060" stroke-width=".9"/><path d="M3 9.5h2.25a3.25 3.25 0 0 1 0 6.5h-2.25z" fill="#d8f0f8" stroke="#405060" stroke-width=".9"/></svg>
<svg class="a" style="left:380px;top:331px;" width="21" height="17" viewBox="0 0 21 17"><path d="M0 4h12.500M18 4h3M0 11.500h3M0 14h3M8.500 12.500h2v-6h2" stroke="#a8a8a8" stroke-width="1" fill="none" stroke-dasharray="1.200 1"/><path d="M12.5 0.8h2.5a3.0 3.0 0 0 1 0 6h-2.5z" fill="#d8f0f8" stroke="#405060" stroke-width=".9"/><path d="M3 9.5h2.25a3.25 3.25 0 0 1 0 6.5h-2.25z" fill="#d8f0f8" stroke="#405060" stroke-width=".9"/></svg>
<svg class="a" style="left:380px;top:365px;" width="21" height="21" viewBox="0 0 21 21"><path d="M11.500 11.500l7.500 6.500" stroke="#6e3c14" stroke-width="2.800" stroke-linecap="round"/><circle cx="6.800" cy="6.900" r="6" fill="#d4f2fa" stroke="#30308a" stroke-width="1"/><path d="M3.500 6.900h6.600M6.800 3.600v6.600" stroke="#101010" stroke-width="1.400"/></svg>
<svg class="a" style="left:380px;top:395px;" width="21" height="21" viewBox="0 0 21 21"><path d="M11.500 11.500l7.500 6.500" stroke="#6e3c14" stroke-width="2.800" stroke-linecap="round"/><circle cx="6.800" cy="6.900" r="6" fill="#d4f2fa" stroke="#30308a" stroke-width="1"/><path d="M3.500 6.900h6.600" stroke="#101010" stroke-width="1.600"/></svg>
<svg class="a" style="left:380px;top:425px;" width="20" height="20" viewBox="0 0 20 20"><rect x=".5" y=".5" width="19" height="19" fill="#b4f0fa" stroke="#2040a8" stroke-width="1"/>
<path d="M10 3v14M3 10h14" stroke="#203040" stroke-width=".8"/>
<path d="M10 1.500l2.500 3.500h-5zM10 18.500l2.500-3.500h-5zM1.500 10l3.500-2.500v5zM18.500 10l-3.500-2.500v5z" fill="#000"/></svg>
<svg class="a" style="left:380px;top:455.5px;" width="21" height="21" viewBox="0 0 21 21"><path d="M11.500 11.500l7.500 6.500" stroke="#6e3c14" stroke-width="2.800" stroke-linecap="round"/><circle cx="6.800" cy="6.900" r="6" fill="#d4f2fa" stroke="#30308a" stroke-width="1"/><rect x="6.500" y="1.500" width="12.500" height="7.500" fill="none" stroke="#ff4040" stroke-width=".9"/></svg>
<div class="t" style="left:383.00px;top:491.00px;font-size:16px;line-height:20px;letter-spacing:-0.062px;font-weight:bold;font-style:italic;">A</div>
<svg class="a" style="left:380px;top:522px;" width="20" height="18" viewBox="0 0 20 18"><path d="M1.500 1l17 16" stroke="#000" stroke-width="1.700"/></svg>
<svg class="a" style="left:383px;top:553px;" width="15" height="16" viewBox="0 0 15 16"><rect x="1.200" y="1.400" width="12.500" height="13.500" fill="none" stroke="#000" stroke-width="1.700"/></svg>
<div class="a" style="left:410px;top:116px;width:756px;height:1px;background:#fafafa"></div>
<div class="a" style="left:410px;top:117px;width:755px;height:1px;background:#a0a0a0"></div>
<div class="a" style="left:410px;top:118px;width:751px;height:497px;border:1px solid #828790;background:#fff"></div>
<div class="a" style="left:1161px;top:118px;width:2px;height:497px;background:#fbfbfb"></div>
<div class="a" style="left:410px;top:615px;width:753px;height:1px;background:#fbfbfb"></div>
<div class="a" style="left:412px;top:120px;width:747px;height:492px;border:1px solid #828790;background:#fff"></div>
<div class="a" style="left:412px;top:96px;width:89px;height:22px;border:1px solid #898c95;border-bottom:none;background:linear-gradient(180deg,#f2f2f2 0,#ebebeb 48%,#dddddd 52%,#d2d2d2 100%);box-shadow:inset 1px 1px 0 #fbfbfb,inset -1px 0 0 #fbfbfb"></div>
<div class="t" style="left:421.50px;top:99.00px;font-size:11px;line-height:16px;letter-spacing:-0.158px;">StartPage</div>
<svg class="a" style="left:474px;top:100px;" width="14" height="14" viewBox="0 0 14 14"><rect x=".5" y=".5" width="13" height="13" rx="1.500" fill="#c4c4c4" stroke="#a8a8a8" stroke-width="1"/><path d="M4 4l6 6M10 4l-6 6" stroke="#fff" stroke-width="1.900"/></svg>
<div class="a" style="left:500px;top:94px;width:114px;height:26px;border:1px solid #898c95;border-bottom:none;background:#fff"></div>
<div class="a" style="left:501px;top:119px;width:112px;height:1px;background:#fff"></div>
<svg class="a" style="left:514px;top:97px;" width="16" height="16" viewBox="0 0 16 16"><defs><linearGradient id="sdg" x1="0" y1="0" x2="0" y2="1"><stop offset="0" stop-color="#4a8cd8"/><stop offset="1" stop-color="#1c5cb0"/></linearGradient></defs><rect width="16" height="16" fill="url(#sdg)"/>
<text x="1.200" y="11.500" font-family="Liberation Sans" font-weight="bold" font-style="italic" font-size="10" fill="#fff" textLength="13.500" lengthAdjust="spacingAndGlyphs">SD</text></svg>
<div class="t" style="left:534.00px;top:97.50px;font-size:11px;line-height:16px;letter-spacing:-0.242px;">demo_top</div>
<svg class="a" style="left:586px;top:99px;" width="14" height="14" viewBox="0 0 14 14"><rect x=".6" y=".6" width="12.800" height="12.800" rx="2" fill="#e2704c" stroke="#c8402c" stroke-width="1.200"/><path d="M4 4l6 6M10 4l-6 6" stroke="#fff" stroke-width="2"/></svg>
<div class="a" style="left:1142px;top:121px;width:16px;height:474px;background:linear-gradient(90deg,#e6e6e6 0,#eeeeee 3px,#f0f0f0 60%,#ececec 100%)"></div><svg class="a" style="left:0;top:0" width="1" height="1"><path d="M1147.0 131.8L1150.5 128.2L1154.0 131.8z" fill="#484848"/></svg><svg class="a" style="left:0;top:0" width="1" height="1"><path d="M1147.0 583.7L1150.5 587.3L1154.0 583.7z" fill="#484848"/></svg><div class="a" style="left:1142px;top:139px;width:15px;height:194px;border:1px solid #979797;border-radius:2.500px;background:linear-gradient(90deg,#f6f6f6 0,#ececec 45%,#d6d6d8 50%,#c6c6c9 100%);box-shadow:inset 0 0 0 1px rgba(255,255,255,.75)"></div><div class="a" style="left:1146px;top:232px;width:7px;height:1px;background:#5a5a5a"></div><div class="a" style="left:1146px;top:233px;width:7px;height:1px;background:#fafafa"></div><div class="a" style="left:1146px;top:235px;width:7px;height:1px;background:#5a5a5a"></div><div class="a" style="left:1146px;top:236px;width:7px;height:1px;background:#fafafa"></div><div class="a" style="left:1146px;top:238px;width:7px;height:1px;background:#5a5a5a"></div><div class="a" style="left:1146px;top:239px;width:7px;height:1px;background:#fafafa"></div>
<div class="a" style="left:413px;top:595px;width:729px;height:16px;background:linear-gradient(180deg,#e6e6e6 0,#eeeeee 3px,#f0f0f0 60%,#ececec 100%)"></div><svg class="a" style="left:0;top:0" width="1" height="1"><path d="M422.8 599.0L419.2 602.5L422.8 606.0z" fill="#484848"/></svg><svg class="a" style="left:0;top:0" width="1" height="1"><path d="M1131.7 599.0L1135.3 602.5L1131.7 606.0z" fill="#484848"/></svg><div class="a" style="left:474px;top:595px;width:590px;height:15px;border:1px solid #979797;border-radius:2.500px;background:linear-gradient(180deg,#f6f6f6 0,#ececec 45%,#d6d6d8 50%,#c6c6c9 100%);box-shadow:inset 0 0 0 1px rgba(255,255,255,.75)"></div><div class="a" style="left:764px;top:599px;width:1px;height:7px;background:#5a5a5a"></div><div class="a" style="left:765px;top:599px;width:1px;height:7px;background:#fafafa"></div><div class="a" style="left:767px;top:599px;width:1px;height:7px;background:#5a5a5a"></div><div class="a" style="left:768px;top:599px;width:1px;height:7px;background:#fafafa"></div><div class="a" style="left:770px;top:599px;width:1px;height:7px;background:#5a5a5a"></div><div class="a" style="left:771px;top:599px;width:1px;height:7px;background:#fafafa"></div>
<div class="a" style="left:1142px;top:595px;width:16px;height:16px;background:#f0f0f0"></div>
<div class="a" style="left:637px;top:169px;width:313px;height:169px;background:#bae0e3;border:1px solid #000;border-radius:3px"></div>
<div class="t" style="left:767.00px;top:177.50px;font-size:13px;line-height:16px;letter-spacing:0.227px;font-weight:bold;">demo_0</div>
<div class="a" style="left:566px;top:205.0px;width:70px;height:1px;background:#8b4513;height:1.200px"></div>
<div class="a" style="left:566px;top:217.0px;width:70px;height:1px;background:#8b4513;height:1.200px"></div>
<div class="a" style="left:566px;top:229.0px;width:70px;height:1px;background:#8b4513;height:1.200px"></div>
<div class="a" style="left:566px;top:241.0px;width:70px;height:1px;background:#8b4513;height:1.200px"></div>
<div class="a" style="left:499px;top:199.0px;width:66px;height:12px;background:#e1fbe1;border:1px solid #4a4a4a;border-bottom:1px solid #3a3a3a;box-shadow:0 1px 0 #8a8a8a"></div>
<div class="t" style="left:507.00px;top:197.00px;font-size:11px;line-height:16px;letter-spacing:-0.492px;">CLK0_PAD</div>
<svg class="a" style="left:560px;top:199.5px;" width="11" height="12" viewBox="0 0 11 12"><path d="M0 .5h6.500L10.500 6L6.500 11.500H0z" fill="#8b4513"/><rect x="1" y="3" width="6" height="6" fill="#000"/><path d="M2.200 4.200l3.600 3.600M5.800 4.200l-3.600 3.600" stroke="#8b4513" stroke-width=".8"/><circle cx="4" cy="6" r="2.100" fill="none" stroke="#8b4513" stroke-width=".6"/></svg>
<svg class="a" style="left:632px;top:199.5px;" width="11" height="12" viewBox="0 0 11 12"><path d="M0 .5h6.500L10.500 6L6.500 11.500H0z" fill="#8b4513"/><rect x="1" y="3" width="6" height="6" fill="#000"/><path d="M2.200 4.200l3.600 3.600M5.800 4.200l-3.600 3.600" stroke="#8b4513" stroke-width=".8"/><circle cx="4" cy="6" r="2.100" fill="none" stroke="#8b4513" stroke-width=".6"/></svg>
<div class="a" style="left:436px;top:211.0px;width:129px;height:12px;background:#e1fbe1;border:1px solid #4a4a4a;border-bottom:1px solid #3a3a3a;box-shadow:0 1px 0 #8a8a8a"></div>
<div class="t" style="left:443.50px;top:209.00px;font-size:11px;line-height:16px;letter-spacing:-0.408px;">COREI2C_0_0_SDA_IO</div>
<svg class="a" style="left:560px;top:211.5px;" width="11" height="12" viewBox="0 0 11 12"><path d="M0 6L3 .5h5L10.500 6L8 11.500H3z" fill="#8b4513"/><rect x="3.200" y="2.500" width="4.800" height="7" fill="#000"/><path d="M4.200 4l2.800 4M7 4l-2.800 4" stroke="#8b4513" stroke-width=".7"/><circle cx="5.600" cy="6" r="1.700" fill="none" stroke="#8b4513" stroke-width=".5"/></svg>
<svg class="a" style="left:632.5px;top:211.5px;" width="11" height="12" viewBox="0 0 11 12"><path d="M0 6L3 .5h5L10.500 6L8 11.500H3z" fill="#8b4513"/><rect x="3.200" y="2.500" width="4.800" height="7" fill="#000"/><path d="M4.200 4l2.800 4M7 4l-2.800 4" stroke="#8b4513" stroke-width=".7"/><circle cx="5.600" cy="6" r="1.700" fill="none" stroke="#8b4513" stroke-width=".5"/></svg>
<div class="a" style="left:438px;top:223.0px;width:127px;height:12px;background:#e1fbe1;border:1px solid #4a4a4a;border-bottom:1px solid #3a3a3a;box-shadow:0 1px 0 #8a8a8a"></div>
<div class="t" style="left:446.00px;top:221.00px;font-size:11px;line-height:16px;letter-spacing:-0.479px;">COREI2C_0_0_SCL_IO</div>
<svg class="a" style="left:560px;top:223.5px;" width="11" height="12" viewBox="0 0 11 12"><path d="M0 6L3 .5h5L10.500 6L8 11.500H3z" fill="#8b4513"/><rect x="3.200" y="2.500" width="4.800" height="7" fill="#000"/><path d="M4.200 4l2.800 4M7 4l-2.800 4" stroke="#8b4513" stroke-width=".7"/><circle cx="5.600" cy="6" r="1.700" fill="none" stroke="#8b4513" stroke-width=".5"/></svg>
<svg class="a" style="left:632.5px;top:223.5px;" width="11" height="12" viewBox="0 0 11 12"><path d="M0 6L3 .5h5L10.500 6L8 11.500H3z" fill="#8b4513"/><rect x="3.200" y="2.500" width="4.800" height="7" fill="#000"/><path d="M4.200 4l2.800 4M7 4l-2.800 4" stroke="#8b4513" stroke-width=".7"/><circle cx="5.600" cy="6" r="1.700" fill="none" stroke="#8b4513" stroke-width=".5"/></svg>
<div class="a" style="left:498px;top:235.0px;width:67px;height:12px;background:#e1fbe1;border:1px solid #4a4a4a;border-bottom:1px solid #3a3a3a;box-shadow:0 1px 0 #8a8a8a"></div>
<div class="t" style="left:506.00px;top:233.00px;font-size:11px;line-height:16px;letter-spacing:-1.086px;">DEVRST_N</div>
<svg class="a" style="left:560px;top:235.5px;" width="11" height="12" viewBox="0 0 11 12"><path d="M0 .5h6.500L10.500 6L6.500 11.500H0z" fill="#8b4513"/><rect x="1" y="3" width="6" height="6" fill="#000"/><path d="M2.200 4.200l3.600 3.600M5.800 4.200l-3.600 3.600" stroke="#8b4513" stroke-width=".8"/><circle cx="4" cy="6" r="2.100" fill="none" stroke="#8b4513" stroke-width=".6"/></svg>
<svg class="a" style="left:632px;top:235.5px;" width="11" height="12" viewBox="0 0 11 12"><path d="M0 .5h6.500L10.500 6L6.500 11.500H0z" fill="#8b4513"/><rect x="1" y="3" width="6" height="6" fill="#000"/><path d="M2.200 4.200l3.600 3.600M5.800 4.200l-3.600 3.600" stroke="#8b4513" stroke-width=".8"/><circle cx="4" cy="6" r="2.100" fill="none" stroke="#8b4513" stroke-width=".6"/></svg>
<div class="t" style="left:644.50px;top:197.00px;font-size:11px;line-height:16px;letter-spacing:-0.805px;">CLK0_PAD</div>
<div class="t" style="left:644.50px;top:209.00px;font-size:11px;line-height:16px;letter-spacing:-0.408px;">COREI2C_0_0_SDA_IO</div>
<div class="t" style="left:644.50px;top:221.00px;font-size:11px;line-height:16px;letter-spacing:-0.451px;">COREI2C_0_0_SCL_IO</div>
<div class="t" style="left:644.50px;top:233.00px;font-size:11px;line-height:16px;letter-spacing:-1.023px;">DEVRST_N</div>
<svg class="a" style="left:631.5px;top:247.5px;" width="12" height="12" viewBox="0 0 12 12"><path d="M6 .6L11.400 6L6 11.400L.6 6z" fill="#808080" stroke="#000" stroke-width="1.300" stroke-linejoin="round"/></svg>
<svg class="a" style="left:645px;top:249.0px;" width="9" height="9" viewBox="0 0 9 9"><rect x=".5" y=".5" width="8" height="8" fill="#bae0e3" stroke="#000" stroke-width="1"/><path d="M2 4.500h5M4.500 2v5" stroke="#000" stroke-width="1"/></svg>
<div class="t" style="left:655.00px;top:245.00px;font-size:11px;line-height:16px;letter-spacing:-0.368px;">corepwm_0_0_PINS</div>
<svg class="a" style="left:631.5px;top:259.5px;" width="12" height="12" viewBox="0 0 12 12"><path d="M6 .6L11.400 6L6 11.400L.6 6z" fill="#808080" stroke="#000" stroke-width="1.300" stroke-linejoin="round"/></svg>
<svg class="a" style="left:645px;top:261.0px;" width="9" height="9" viewBox="0 0 9 9"><rect x=".5" y=".5" width="8" height="8" fill="#bae0e3" stroke="#000" stroke-width="1"/><path d="M2 4.500h5M4.500 2v5" stroke="#000" stroke-width="1"/></svg>
<div class="t" style="left:655.00px;top:257.00px;font-size:11px;line-height:16px;letter-spacing:-0.850px;">CORESF2RESET_0_PINS</div>
<div class="a" style="left:950px;top:205.0px;width:70px;height:2px;background:#b8860b"></div>
<div class="a" style="left:950px;top:217.0px;width:70px;height:2px;background:#b8860b"></div>
<div class="a" style="left:950px;top:229.0px;width:70px;height:2px;background:#b8860b"></div>
<div class="a" style="left:950px;top:241.0px;width:70px;height:2px;background:#b8860b"></div>
<div class="a" style="left:950px;top:253.0px;width:70px;height:2px;background:#b8860b"></div>
<div class="a" style="left:950px;top:265.0px;width:70px;height:2px;background:#b8860b"></div>
<div class="a" style="left:950px;top:277.0px;width:70px;height:2px;background:#b8860b"></div>
<div class="a" style="left:1021px;top:199.0px;width:88px;height:12px;background:#e1fbe1;border:1px solid #4a4a4a;border-bottom:1px solid #3a3a3a;box-shadow:0 1px 0 #8a8a8a"></div>
<div class="a" style="left:1021px;top:211.0px;width:88px;height:12px;background:#e1fbe1;border:1px solid #4a4a4a;border-bottom:1px solid #3a3a3a;box-shadow:0 1px 0 #8a8a8a"></div>
<div class="a" style="left:1021px;top:223.0px;width:86.5px;height:12px;background:#e1fbe1;border:1px solid #4a4a4a;border-bottom:1px solid #3a3a3a;box-shadow:0 1px 0 #8a8a8a"></div>
<div class="a" style="left:1021px;top:235.0px;width:86.5px;height:12px;background:#e1fbe1;border:1px solid #4a4a4a;border-bottom:1px solid #3a3a3a;box-shadow:0 1px 0 #8a8a8a"></div>
<div class="a" style="left:1021px;top:247.0px;width:113.5px;height:12px;background:#e1fbe1;border:1px solid #4a4a4a;border-bottom:1px solid #3a3a3a;box-shadow:0 1px 0 #8a8a8a"></div>
<div class="a" style="left:1021px;top:259.0px;width:113.5px;height:12px;background:#e1fbe1;border:1px solid #4a4a4a;border-bottom:1px solid #3a3a3a;box-shadow:0 1px 0 #8a8a8a"></div>
<div class="a" style="left:1021px;top:271.0px;width:88px;height:12px;background:#e1fbe1;border:1px solid #4a4a4a;border-bottom:1px solid #3a3a3a;box-shadow:0 1px 0 #8a8a8a"></div>
<div class="t" style="left:869.50px;top:197.00px;font-size:11px;line-height:16px;letter-spacing:-0.411px;">I2C_0_PADS</div>
<svg class="a" style="left:933px;top:201.0px;" width="9" height="9" viewBox="0 0 9 9"><rect x=".5" y=".5" width="8" height="8" fill="#bae0e3" stroke="#000" stroke-width="1"/><path d="M2 4.500h5M4.500 2v5" stroke="#000" stroke-width="1"/></svg>
<svg class="a" style="left:943.5px;top:199.5px;" width="12" height="12" viewBox="0 0 12 12"><path d="M6 .6L11.400 6L6 11.400L.6 6z" fill="#8b4513" stroke="#000" stroke-width="1.300" stroke-linejoin="round"/></svg>
<div class="t" style="left:869.50px;top:209.00px;font-size:11px;line-height:16px;letter-spacing:-0.411px;">I2C_1_PADS</div>
<svg class="a" style="left:933px;top:213.0px;" width="9" height="9" viewBox="0 0 9 9"><rect x=".5" y=".5" width="8" height="8" fill="#bae0e3" stroke="#000" stroke-width="1"/><path d="M2 4.500h5M4.500 2v5" stroke="#000" stroke-width="1"/></svg>
<svg class="a" style="left:943.5px;top:211.5px;" width="12" height="12" viewBox="0 0 12 12"><path d="M6 .6L11.400 6L6 11.400L.6 6z" fill="#8b4513" stroke="#000" stroke-width="1.300" stroke-linejoin="round"/></svg>
<div class="t" style="left:871.00px;top:221.00px;font-size:11px;line-height:16px;letter-spacing:-0.623px;">SPI_0_PADS</div>
<svg class="a" style="left:933px;top:225.0px;" width="9" height="9" viewBox="0 0 9 9"><rect x=".5" y=".5" width="8" height="8" fill="#bae0e3" stroke="#000" stroke-width="1"/><path d="M2 4.500h5M4.500 2v5" stroke="#000" stroke-width="1"/></svg>
<svg class="a" style="left:943.5px;top:223.5px;" width="12" height="12" viewBox="0 0 12 12"><path d="M6 .6L11.400 6L6 11.400L.6 6z" fill="#8b4513" stroke="#000" stroke-width="1.300" stroke-linejoin="round"/></svg>
<div class="t" style="left:871.00px;top:233.00px;font-size:11px;line-height:16px;letter-spacing:-0.623px;">SPI_1_PADS</div>
<svg class="a" style="left:933px;top:237.0px;" width="9" height="9" viewBox="0 0 9 9"><rect x=".5" y=".5" width="8" height="8" fill="#bae0e3" stroke="#000" stroke-width="1"/><path d="M2 4.500h5M4.500 2v5" stroke="#000" stroke-width="1"/></svg>
<svg class="a" style="left:943.5px;top:235.5px;" width="12" height="12" viewBox="0 0 12 12"><path d="M6 .6L11.400 6L6 11.400L.6 6z" fill="#8b4513" stroke="#000" stroke-width="1.300" stroke-linejoin="round"/></svg>
<div class="t" style="left:843.00px;top:245.00px;font-size:11px;line-height:16px;letter-spacing:-0.659px;">MMUART_1_PADS</div>
<svg class="a" style="left:933px;top:249.0px;" width="9" height="9" viewBox="0 0 9 9"><rect x=".5" y=".5" width="8" height="8" fill="#bae0e3" stroke="#000" stroke-width="1"/><path d="M2 4.500h5M4.500 2v5" stroke="#000" stroke-width="1"/></svg>
<svg class="a" style="left:943.5px;top:247.5px;" width="12" height="12" viewBox="0 0 12 12"><path d="M6 .6L11.400 6L6 11.400L.6 6z" fill="#8b4513" stroke="#000" stroke-width="1.300" stroke-linejoin="round"/></svg>
<div class="t" style="left:843.00px;top:257.00px;font-size:11px;line-height:16px;letter-spacing:-0.659px;">MMUART_0_PADS</div>
<svg class="a" style="left:933px;top:261.0px;" width="9" height="9" viewBox="0 0 9 9"><rect x=".5" y=".5" width="8" height="8" fill="#bae0e3" stroke="#000" stroke-width="1"/><path d="M2 4.500h5M4.500 2v5" stroke="#000" stroke-width="1"/></svg>
<svg class="a" style="left:943.5px;top:259.5px;" width="12" height="12" viewBox="0 0 12 12"><path d="M6 .6L11.400 6L6 11.400L.6 6z" fill="#8b4513" stroke="#000" stroke-width="1.300" stroke-linejoin="round"/></svg>
<div class="t" style="left:869.00px;top:269.00px;font-size:11px;line-height:16px;letter-spacing:-0.807px;">MDDR_PADS</div>
<svg class="a" style="left:933px;top:273.0px;" width="9" height="9" viewBox="0 0 9 9"><rect x=".5" y=".5" width="8" height="8" fill="#bae0e3" stroke="#000" stroke-width="1"/><path d="M2 4.500h5M4.500 2v5" stroke="#000" stroke-width="1"/></svg>
<svg class="a" style="left:943.5px;top:271.5px;" width="12" height="12" viewBox="0 0 12 12"><path d="M6 .6L11.400 6L6 11.400L.6 6z" fill="#8b4513" stroke="#000" stroke-width="1.300" stroke-linejoin="round"/></svg>
<div class="t" style="left:872.50px;top:281.00px;font-size:11px;line-height:16px;letter-spacing:-0.547px;">SDIF0_PINS</div>
<svg class="a" style="left:933px;top:285.0px;" width="9" height="9" viewBox="0 0 9 9"><rect x=".5" y=".5" width="8" height="8" fill="#bae0e3" stroke="#000" stroke-width="1"/><path d="M2 4.500h5M4.500 2v5" stroke="#000" stroke-width="1"/></svg>
<svg class="a" style="left:943.5px;top:283.5px;" width="12" height="12" viewBox="0 0 12 12"><path d="M6 .6L11.400 6L6 11.400L.6 6z" fill="#808080" stroke="#000" stroke-width="1.300" stroke-linejoin="round"/></svg>
<div class="t" style="left:804.50px;top:293.00px;font-size:11px;line-height:16px;letter-spacing:-0.663px;">CORESF2CONFIG_0_PINS</div>
<svg class="a" style="left:933px;top:297.0px;" width="9" height="9" viewBox="0 0 9 9"><rect x=".5" y=".5" width="8" height="8" fill="#bae0e3" stroke="#000" stroke-width="1"/><path d="M2 4.500h5M4.500 2v5" stroke="#000" stroke-width="1"/></svg>
<svg class="a" style="left:943.5px;top:295.5px;" width="12" height="12" viewBox="0 0 12 12"><path d="M6 .6L11.400 6L6 11.400L.6 6z" fill="#808080" stroke="#000" stroke-width="1.300" stroke-linejoin="round"/></svg>
<svg class="a" style="left:1015.5px;top:199.5px;" width="12" height="12" viewBox="0 0 12 12"><path d="M6 .6L11.400 6L6 11.400L.6 6z" fill="#8b4513" stroke="#000" stroke-width="1.300" stroke-linejoin="round"/></svg>
<svg class="a" style="left:1029px;top:201.0px;" width="9" height="9" viewBox="0 0 9 9"><rect x=".5" y=".5" width="8" height="8" fill="#e1fbe1" stroke="#000" stroke-width="1"/><path d="M2 4.500h5M4.500 2v5" stroke="#000" stroke-width="1"/></svg>
<div class="t" style="left:1039.00px;top:197.00px;font-size:11px;line-height:16px;letter-spacing:-0.461px;">I2C_0_PADS</div>
<svg class="a" style="left:1015.5px;top:211.5px;" width="12" height="12" viewBox="0 0 12 12"><path d="M6 .6L11.400 6L6 11.400L.6 6z" fill="#8b4513" stroke="#000" stroke-width="1.300" stroke-linejoin="round"/></svg>
<svg class="a" style="left:1029px;top:213.0px;" width="9" height="9" viewBox="0 0 9 9"><rect x=".5" y=".5" width="8" height="8" fill="#e1fbe1" stroke="#000" stroke-width="1"/><path d="M2 4.500h5M4.500 2v5" stroke="#000" stroke-width="1"/></svg>
<div class="t" style="left:1039.00px;top:209.00px;font-size:11px;line-height:16px;letter-spacing:-0.461px;">I2C_1_PADS</div>
<svg class="a" style="left:1015.5px;top:223.5px;" width="12" height="12" viewBox="0 0 12 12"><path d="M6 .6L11.400 6L6 11.400L.6 6z" fill="#8b4513" stroke="#000" stroke-width="1.300" stroke-linejoin="round"/></svg>
<svg class="a" style="left:1029px;top:225.0px;" width="9" height="9" viewBox="0 0 9 9"><rect x=".5" y=".5" width="8" height="8" fill="#e1fbe1" stroke="#000" stroke-width="1"/><path d="M2 4.500h5M4.500 2v5" stroke="#000" stroke-width="1"/></svg>
<div class="t" style="left:1039.00px;top:221.00px;font-size:11px;line-height:16px;letter-spacing:-0.623px;">SPI_0_PADS</div>
<svg class="a" style="left:1015.5px;top:235.5px;" width="12" height="12" viewBox="0 0 12 12"><path d="M6 .6L11.400 6L6 11.400L.6 6z" fill="#8b4513" stroke="#000" stroke-width="1.300" stroke-linejoin="round"/></svg>
<svg class="a" style="left:1029px;top:237.0px;" width="9" height="9" viewBox="0 0 9 9"><rect x=".5" y=".5" width="8" height="8" fill="#e1fbe1" stroke="#000" stroke-width="1"/><path d="M2 4.500h5M4.500 2v5" stroke="#000" stroke-width="1"/></svg>
<div class="t" style="left:1039.00px;top:233.00px;font-size:11px;line-height:16px;letter-spacing:-0.623px;">SPI_1_PADS</div>
<svg class="a" style="left:1015.5px;top:247.5px;" width="12" height="12" viewBox="0 0 12 12"><path d="M6 .6L11.400 6L6 11.400L.6 6z" fill="#8b4513" stroke="#000" stroke-width="1.300" stroke-linejoin="round"/></svg>
<svg class="a" style="left:1029px;top:249.0px;" width="9" height="9" viewBox="0 0 9 9"><rect x=".5" y=".5" width="8" height="8" fill="#e1fbe1" stroke="#000" stroke-width="1"/><path d="M2 4.500h5M4.500 2v5" stroke="#000" stroke-width="1"/></svg>
<div class="t" style="left:1039.00px;top:245.00px;font-size:11px;line-height:16px;letter-spacing:-0.697px;">MMUART_1_PADS</div>
<svg class="a" style="left:1015.5px;top:259.5px;" width="12" height="12" viewBox="0 0 12 12"><path d="M6 .6L11.400 6L6 11.400L.6 6z" fill="#8b4513" stroke="#000" stroke-width="1.300" stroke-linejoin="round"/></svg>
<svg class="a" style="left:1029px;top:261.0px;" width="9" height="9" viewBox="0 0 9 9"><rect x=".5" y=".5" width="8" height="8" fill="#e1fbe1" stroke="#000" stroke-width="1"/><path d="M2 4.500h5M4.500 2v5" stroke="#000" stroke-width="1"/></svg>
<div class="t" style="left:1039.00px;top:257.00px;font-size:11px;line-height:16px;letter-spacing:-0.697px;">MMUART_0_PADS</div>
<svg class="a" style="left:1015.5px;top:271.5px;" width="12" height="12" viewBox="0 0 12 12"><path d="M6 .6L11.400 6L6 11.400L.6 6z" fill="#8b4513" stroke="#000" stroke-width="1.300" stroke-linejoin="round"/></svg>
<svg class="a" style="left:1029px;top:273.0px;" width="9" height="9" viewBox="0 0 9 9"><rect x=".5" y=".5" width="8" height="8" fill="#e1fbe1" stroke="#000" stroke-width="1"/><path d="M2 4.500h5M4.500 2v5" stroke="#000" stroke-width="1"/></svg>
<div class="t" style="left:1039.00px;top:269.00px;font-size:11px;line-height:16px;letter-spacing:-0.918px;">MDDR_PADS</div>
<div class="t" style="left:641px;top:318.300px;font-size:11px;line-height:16px;transform:rotate(-90deg);transform-origin:center;width:16px;text-align:center">S</div>
<svg class="a" style="left:644px;top:332px;" width="11" height="11" viewBox="0 0 11 11"><path d="M.6 .6h9.800v9.800h-2.400L5.500 6.800L3 10.400H.6z" fill="#808080" stroke="#000" stroke-width="1.100" stroke-linejoin="miter"/></svg>
<svg class="a" style="left:917px;top:321px;" width="17" height="16" viewBox="0 0 17 16"><g transform="scale(0.64)"><defs><mask id="gw2"><rect x="0" y="0" width="26" height="26" fill="#fff"/><rect x="19.200" y="-3" width="3.400" height="9" fill="#000" transform="rotate(45 20.900 5.500)"/></mask></defs>
<path d="M15.60 12.30L17.53 13.38L17.08 15.24L14.87 15.32L14.06 16.54L14.84 18.61L13.30 19.75L11.56 18.38L10.15 18.80L9.42 20.89L7.51 20.77L7.05 18.60L5.70 18.02L3.80 19.15L2.41 17.83L3.45 15.88L2.80 14.56L0.61 14.21L0.40 12.30L2.45 11.47L2.80 10.04L1.35 8.37L2.41 6.77L4.52 7.46L5.70 6.58L5.67 4.37L7.51 3.83L8.68 5.71L10.15 5.80L11.54 4.08L13.30 4.85L12.99 7.04L14.06 8.06L16.23 7.64L17.08 9.36L15.44 10.84Z" fill="#c4c4c4" stroke="#6a6a6a" stroke-width=".9" stroke-linejoin="round"/>
<circle cx="9.0" cy="12.3" r="3.300" fill="#f8f8f8" stroke="#7a7a7a" stroke-width=".9"/>
<path d="M4.300 22.700L18 9" stroke="#000" stroke-width="3.700" stroke-linecap="round"/>
<circle cx="20.400" cy="6.200" r="5" fill="#000" mask="url(#gw2)"/></g></svg>
<div class="a" style="left:8px;top:635px;width:1166px;height:22px;background:#3399ff"></div>
<div class="t" style="left:8.00px;top:638.00px;font-size:11px;line-height:16px;letter-spacing:-0.786px;color:#fff;">Log</div>
<svg class="a" style="left:1144px;top:640px;" width="10" height="10" viewBox="0 0 10 10"><rect x="3.500" y="1.500" width="5" height="5" fill="#3399ff" stroke="#000" stroke-width="1"/><path d="M3.500 2.500h5" stroke="#000" stroke-width="1.500"/><rect x="1.500" y="4.500" width="5" height="5" fill="#3399ff" stroke="#000" stroke-width="1"/><path d="M1.500 5.500h5" stroke="#000" stroke-width="1.500"/></svg>
<svg class="a" style="left:1160.7px;top:641.8px;" width="9" height="8" viewBox="0 0 9 8"><path d="M.8 .7L7.700 6.500M7.700 .7L.8 6.500" stroke="#000" stroke-width="1.500"/></svg>
<div class="a" style="left:17px;top:666px;width:1148px;height:26px;border-top:1px solid #fdfdfd;border-left:1px solid #fdfdfd;border-bottom:1px solid #c0c0c0;border-right:1px solid #c0c0c0"></div>
<div class="a" style="left:19px;top:669px;width:80px;height:20px;border:1px solid #5a5a5a;border-radius:3.500px;background:linear-gradient(180deg,#cfcfcf 0,#dadada 4px,#e4e4e4 60%,#ececec 100%);box-shadow:inset 0 1px 2px rgba(0,0,0,.18)"></div>
<svg class="a" style="left:26px;top:672px;" width="16" height="16" viewBox="0 0 16 16"><defs><linearGradient id="mg" x1="0" y1="0" x2="0" y2="1"><stop offset=".55" stop-color="#fff"/><stop offset="1" stop-color="#cfe4fa"/></linearGradient></defs><rect x=".8" y=".8" width="14.200" height="14.500" rx="2.200" fill="url(#mg)" stroke="#000" stroke-width="1.200"/><path d="M4 4.500h8M4 6.500h8M4 8.500h8M4 10.500h8" stroke="#101010" stroke-width="1"/></svg>
<div class="t" style="left:45.50px;top:672.00px;font-size:11px;line-height:16px;letter-spacing:-0.393px;">Messages</div>
<svg class="a" style="left:105px;top:671px;" width="16" height="16" viewBox="0 0 16 16"><defs><radialGradient id="eg" cx=".4" cy=".3" r=".8"><stop offset="0" stop-color="#f06060"/><stop offset=".5" stop-color="#d02020"/><stop offset="1" stop-color="#901010"/></radialGradient></defs>
<circle cx="8" cy="8.300" r="7.600" fill="url(#eg)" stroke="#b0a0a0" stroke-width=".9"/><path d="M4.800 5.100l6.400 6.400M11.200 5.100l-6.400 6.400" stroke="#fff" stroke-width="2.300" stroke-linecap="round"/></svg>
<div class="t" style="left:124.50px;top:671.00px;font-size:11px;line-height:16px;letter-spacing:-0.159px;">Errors</div>
<svg class="a" style="left:167px;top:672px;" width="16" height="15" viewBox="0 0 16 15"><defs><linearGradient id="wg" x1="0" y1="0" x2="0" y2="1"><stop offset="0" stop-color="#fff080"/><stop offset="1" stop-color="#f0b800"/></linearGradient></defs>
<path d="M7.500 1.200L14.600 13.600H.5z" fill="url(#wg)" stroke="#b89020" stroke-width=".9" stroke-linejoin="round"/><path d="M7.500 5v5" stroke="#000" stroke-width="1.700"/><circle cx="7.500" cy="11.800" r="1" fill="#000"/></svg>
<div class="t" style="left:187.00px;top:671.00px;font-size:11px;line-height:16px;letter-spacing:-0.258px;">Warnings</div>
<svg class="a" style="left:245px;top:671px;" width="16" height="17" viewBox="0 0 16 17"><defs><radialGradient id="ig" cx=".4" cy=".3" r=".8"><stop offset="0" stop-color="#6a9af0"/><stop offset=".5" stop-color="#2858c8"/><stop offset="1" stop-color="#103090"/></radialGradient></defs>
<circle cx="7.800" cy="8.300" r="7.400" fill="url(#ig)" stroke="#a0a8c0" stroke-width=".9"/><rect x="6.800" y="7" width="2" height="6" fill="#fff"/><circle cx="7.800" cy="4.700" r="1.200" fill="#fff"/></svg>
<div class="t" style="left:264.50px;top:671.00px;font-size:11px;line-height:16px;letter-spacing:0.160px;">Info</div>
<div class="a" style="left:17px;top:698px;width:1148px;height:92px;border:1px solid #d3dbe8;border-top-color:#9a9ea8;background:#fff"></div>
<div class="a" style="left:18px;top:699px;width:1130px;height:90px;overflow:hidden"><div class="a" style="left:-18px;top:-699px;width:1182px;height:830px"><svg class="a" style="left:21.5px;top:694.5px;" width="17" height="17" viewBox="0 0 17 17"><circle cx="8.500" cy="8.500" r="7.300" fill="#000080" stroke="#000" stroke-width=".9"/>
<path d="M7.300 3h2.600v2.400h-2.600zM6 6.800h4v5.400h1.400v1.600h-5.600v-1.600h1.600v-3.800h-1.400z" fill="#fff"/></svg><div class="t" style="left:38.20px;top:699.00px;font-size:11.667px;line-height:16px;font-family:'Liberation Mono',monospace;">Info: PAD pin `demo_0:MDDR_PADS` of `demo_0` is automatically connected to a top-level port.</div><svg class="a" style="left:21.5px;top:712.5px;" width="17" height="17" viewBox="0 0 17 17"><circle cx="8.500" cy="8.500" r="7.300" fill="#000080" stroke="#000" stroke-width=".9"/>
<path d="M7.300 3h2.600v2.400h-2.600zM6 6.800h4v5.400h1.400v1.600h-5.600v-1.600h1.600v-3.800h-1.400z" fill="#fff"/></svg><div class="t" style="left:38.20px;top:717.00px;font-size:11.667px;line-height:16px;font-family:'Liberation Mono',monospace;">Info: PAD pin `demo_0:CLK0_PAD` of `demo_0` is automatically connected to a top-level port.</div><svg class="a" style="left:21.5px;top:730.5px;" width="17" height="17" viewBox="0 0 17 17"><circle cx="8.500" cy="8.500" r="7.300" fill="#000080" stroke="#000" stroke-width=".9"/>
<path d="M7.300 3h2.600v2.400h-2.600zM6 6.800h4v5.400h1.400v1.600h-5.600v-1.600h1.600v-3.800h-1.400z" fill="#fff"/></svg><div class="t" style="left:38.20px;top:735.00px;font-size:11.667px;line-height:16px;font-family:'Liberation Mono',monospace;">Info: PAD pin `demo_0:COREI2C_0_0_SDA_IO` of `demo_0` is automatically connected to a top-level port.</div><svg class="a" style="left:21.5px;top:748.5px;" width="17" height="17" viewBox="0 0 17 17"><circle cx="8.500" cy="8.500" r="7.300" fill="#000080" stroke="#000" stroke-width=".9"/>
<path d="M7.300 3h2.600v2.400h-2.600zM6 6.800h4v5.400h1.400v1.600h-5.600v-1.600h1.600v-3.800h-1.400z" fill="#fff"/></svg><div class="t" style="left:38.20px;top:753.00px;font-size:11.667px;line-height:16px;font-family:'Liberation Mono',monospace;">Info: PAD pin `demo_0:COREI2C_0_0_SCL_IO` of `demo_0` is automatically connected to a top-level port.</div><svg class="a" style="left:21.5px;top:766.5px;" width="17" height="17" viewBox="0 0 17 17"><circle cx="8.500" cy="8.500" r="7.300" fill="#000080" stroke="#000" stroke-width=".9"/>
<path d="M7.300 3h2.600v2.400h-2.600zM6 6.800h4v5.400h1.400v1.600h-5.600v-1.600h1.600v-3.800h-1.400z" fill="#fff"/></svg><div class="t" style="left:38.20px;top:771.00px;font-size:11.667px;line-height:16px;font-family:'Liberation Mono',monospace;">Info: PAD pin `demo_0:DEVRST_N` of `demo_0` is automatically connected to a top-level port.</div></div></div>
<div class="a" style="left:1148px;top:699px;width:16px;height:90px;background:linear-gradient(90deg,#e6e6e6 0,#eeeeee 3px,#f0f0f0 60%,#ececec 100%)"></div><svg class="a" style="left:0;top:0" width="1" height="1"><path d="M1153.0 709.8L1156.5 706.2L1160.0 709.8z" fill="#484848"/></svg><svg class="a" style="left:0;top:0" width="1" height="1"><path d="M1153.0 777.7L1156.5 781.3L1160.0 777.7z" fill="#484848"/></svg><div class="a" style="left:1148px;top:755px;width:15px;height:16px;border:1px solid #979797;border-radius:2.500px;background:linear-gradient(90deg,#f6f6f6 0,#ececec 45%,#d6d6d8 50%,#c6c6c9 100%);box-shadow:inset 0 0 0 1px rgba(255,255,255,.75)"></div>
<div class="a" style="left:851px;top:802px;width:99px;height:18px;border:1px solid #a0a0a0;border-right-color:#fff;border-bottom-color:#fff"></div>
<div class="t" style="left:854.50px;top:802.00px;font-size:11px;line-height:16px;letter-spacing:-0.329px;">Fam: SmartFusion2</div>
<div class="a" style="left:955.5px;top:802px;width:75px;height:18px;border:1px solid #a0a0a0;border-right-color:#fff;border-bottom-color:#fff"></div>
<div class="t" style="left:959.00px;top:802.00px;font-size:11px;line-height:16px;letter-spacing:-0.359px;">Die: M2S050T</div>
<div class="a" style="left:1036px;top:802px;width:79px;height:18px;border:1px solid #a0a0a0;border-right-color:#fff;border-bottom-color:#fff"></div>
<div class="t" style="left:1039.50px;top:802.00px;font-size:11px;line-height:16px;letter-spacing:-0.418px;">Pkg: 484 FBGA</div>
<div class="a" style="left:1121px;top:802px;width:34px;height:18px;border:1px solid #a0a0a0;border-right-color:#fff;border-bottom-color:#fff"></div>
<div class="t" style="left:1124.50px;top:802.00px;font-size:11px;line-height:16px;letter-spacing:-1.086px;">VHDL</div>
<svg class="a" style="left:1162px;top:809px;" width="12" height="12" viewBox="0 0 12 12"><rect x="9" y="1" width="2" height="2" fill="#fff"/><rect x="8" y="0" width="2" height="2" fill="#b8b8b8"/><rect x="9" y="5" width="2" height="2" fill="#fff"/><rect x="8" y="4" width="2" height="2" fill="#b8b8b8"/><rect x="9" y="9" width="2" height="2" fill="#fff"/><rect x="8" y="8" width="2" height="2" fill="#b8b8b8"/><rect x="5" y="5" width="2" height="2" fill="#fff"/><rect x="4" y="4" width="2" height="2" fill="#b8b8b8"/><rect x="5" y="9" width="2" height="2" fill="#fff"/><rect x="4" y="8" width="2" height="2" fill="#b8b8b8"/><rect x="1" y="9" width="2" height="2" fill="#fff"/><rect x="0" y="8" width="2" height="2" fill="#b8b8b8"/></svg>
<div class="a" style="left:8px;top:52px;width:1px;height:582px;background:rgba(255,255,255,.6)"></div>
<div class="a" style="left:8px;top:657px;width:1px;height:165px;background:rgba(255,255,255,.6)"></div>
<div class="a" style="left:8px;top:821px;width:1166px;height:1px;background:#fafafa"></div>
</div></div>
<div class="a" style="left:20px;top:3px;width:250px;height:23px;border-radius:12px;background:radial-gradient(ellipse at center,rgba(255,255,255,.45) 0,rgba(255,255,255,.25) 50%,rgba(255,255,255,0) 100%)"></div>
<div class="t" style="left:29.00px;top:7.00px;font-size:12.3px;line-height:16px;letter-spacing:0.010px;text-shadow:0 0 4px rgba(255,255,255,.9),0 0 8px rgba(255,255,255,.8);">Libero - D:\Microsemi\Demo\test\test.prjx*</div>
<div class="a" style="left:7.800px;top:6.700px;width:16.400px;height:16.400px;border-radius:50%;background:conic-gradient(from 0deg,#00aadc 0deg,#0070bc 40deg,#0050aa 95deg,#e8d860 122deg,#ffd040 135deg,#ff9600 170deg,#ff5000 205deg,#ff1400 240deg,#e62800 262deg,#30b030 278deg,#00b450 300deg,#00b4aa 335deg,#00aadc 360deg)"></div>
<svg class="a" style="left:7px;top:6px" width="18" height="18" viewBox="0 0 18 18">
<defs><linearGradient id="lgi" x1="0" y1="0" x2="0" y2="1"><stop offset="0" stop-color="#00a0b0"/><stop offset=".45" stop-color="#109098"/><stop offset=".6" stop-color="#c06020"/><stop offset="1" stop-color="#e05a10"/></linearGradient></defs>
<circle cx="9" cy="9.300" r="3.200" fill="url(#lgi)"/>
<path d="M7 5.700A4 4 0 1 0 11 5.700" fill="none" stroke="#fff" stroke-width="1.900" stroke-linecap="round"/>
<rect x="8.200" y="3.300" width="1.600" height="4.500" rx=".7" fill="#d8f4f8"/>
</svg>
<div class="a" style="left:1072px;top:1px;width:103px;height:19px;border:1px solid #5c4a48;border-top:none;border-radius:0 0 5px 5px;background:#fff;overflow:hidden">
 <div class="a" style="left:1px;top:0;width:26px;height:17px;background:linear-gradient(180deg,#dccfcb 0,#cbbab6 7px,#a9948f 8px,#b8a5a0 17px)"></div>
 <div class="a" style="left:28px;top:0;width:25px;height:17px;background:linear-gradient(180deg,#dccfcb 0,#cbbab6 7px,#a9948f 8px,#b8a5a0 17px)"></div>
 <div class="a" style="left:27px;top:0;width:1px;height:19px;background:#5c4a48"></div>
 <div class="a" style="left:54px;top:0;width:1px;height:19px;background:#6a2a20"></div>
 <div class="a" style="left:55px;top:0;width:46px;height:17px;background:linear-gradient(180deg,#eba898 0,#e08a78 7px,#c8432a 8px,#d25a3c 13px,#e08868 17px)"></div>
 <svg class="a" style="left:-1px;top:-1px" width="103" height="20" viewBox="0 0 103 20">
  <rect x="9.500" y="10.500" width="11" height="3" fill="#fff" stroke="#4a4658" stroke-width="1"/>
  <rect x="36.500" y="5.500" width="10" height="8" fill="none" stroke="#4a4658" stroke-width="1"/>
  <rect x="37.500" y="6.500" width="8" height="6" fill="none" stroke="#fff" stroke-width="1.600"/>
  <rect x="39.500" y="8.500" width="4" height="2" fill="none" stroke="#4a4658" stroke-width="1"/>
  <path d="M73.500 5.500h3.200l2.300 2.600 2.300-2.600h3.200l-3.800 4.300 4 4.400h-3.400l-2.300-2.700-2.300 2.700h-3.400l4-4.400z" fill="#fff" stroke="#4a4658" stroke-width=".9"/>
 </svg>
</div>
</div>
</body></html>
